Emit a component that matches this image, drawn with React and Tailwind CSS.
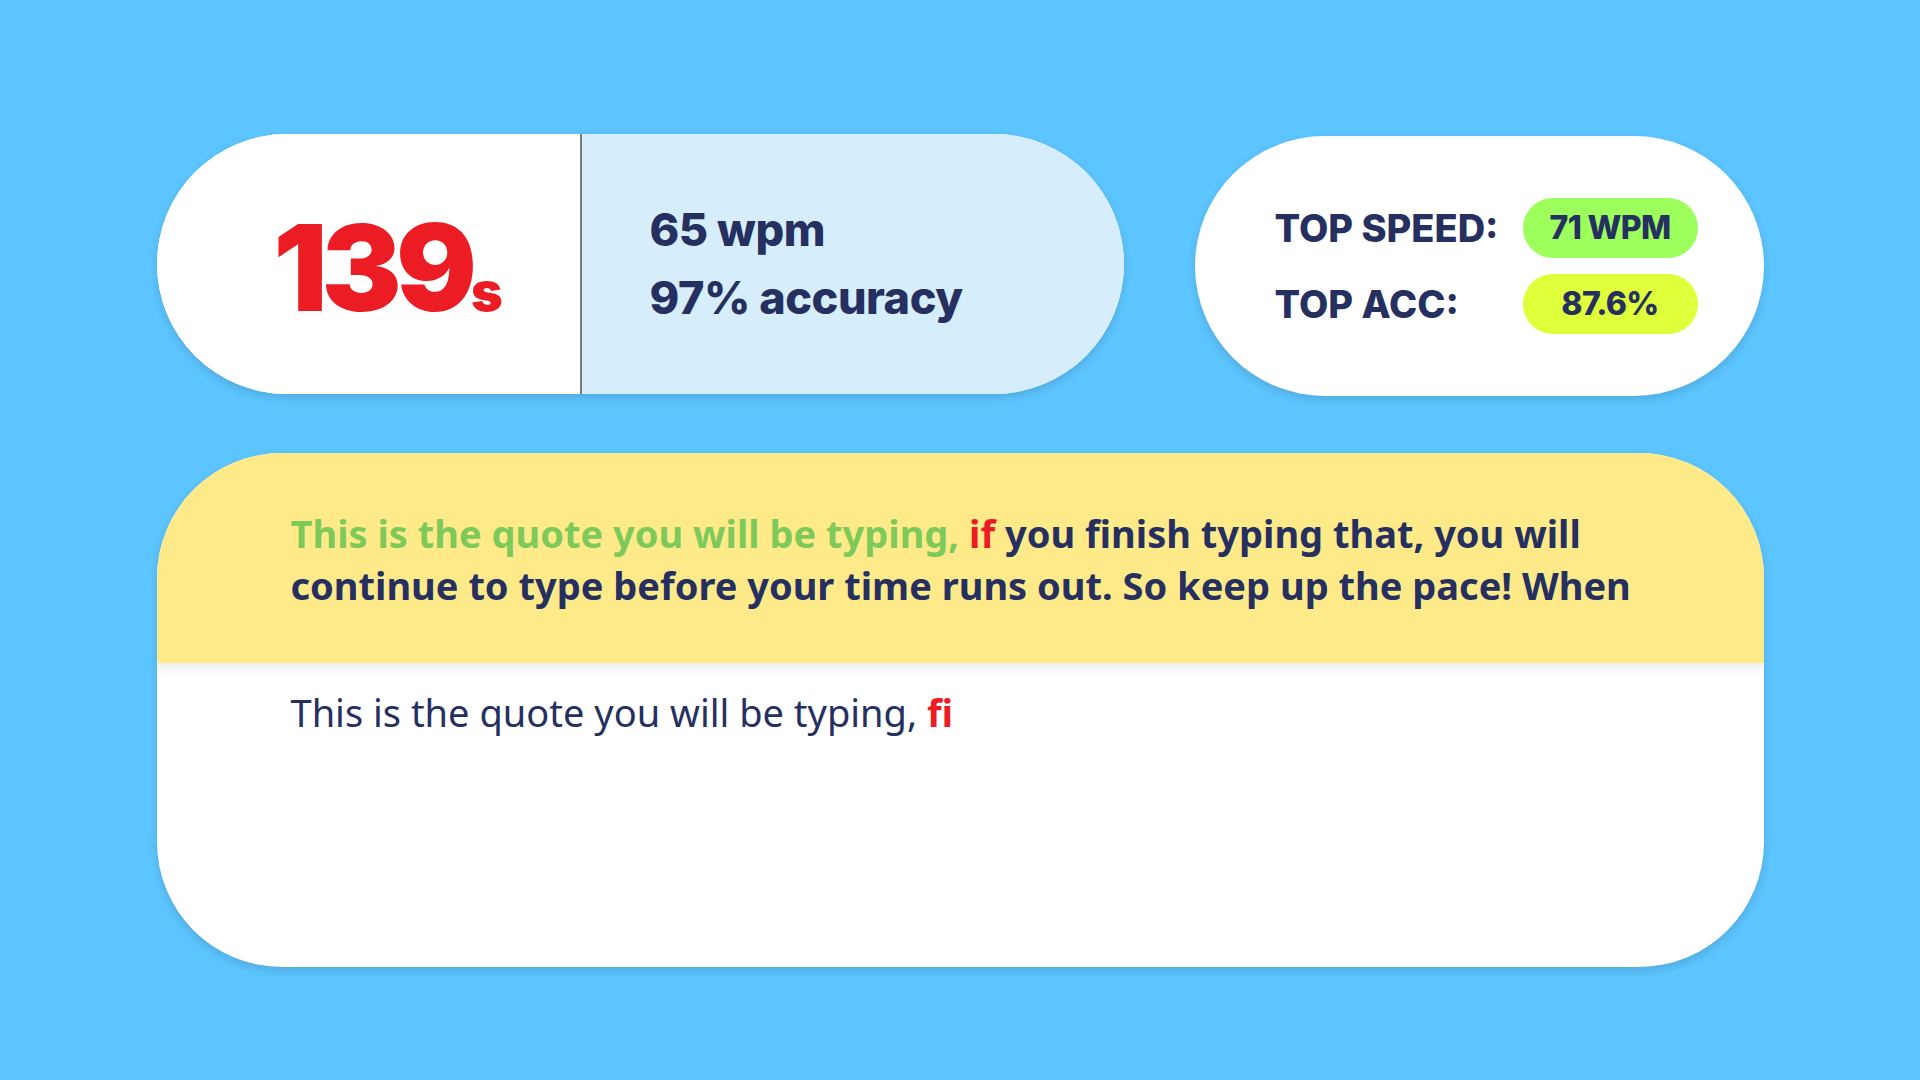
import React from "react";

export default function App() {
  const poppins = { fontFamily: "Inter, 'Noto Sans', sans-serif" };
  const segoe = { fontFamily: "'Noto Sans', 'Open Sans', sans-serif" };
  return (
    <div className="w-[1920px] h-[1080px] bg-[#5cc4fe] flex flex-col items-center pt-[134px] overflow-hidden">
      <div className="w-[1607px] flex flex-col gap-[59px]">
        <div className="flex gap-[71px] h-[260px]">
          <div className="w-[967px] h-[260px] rounded-full overflow-hidden flex bg-white shadow-[0_4px_8px_rgba(0,0,0,0.12)]">
            <div className="w-[423px] h-full bg-white flex items-center justify-center pl-[40px]">
              <div className="flex items-baseline text-[#ec1c24] font-black translate-y-[4px]" style={poppins}>
                <span className="text-[120px] leading-none tracking-[-0.05em]">139</span>
                <span className="text-[54px] leading-none">s</span>
              </div>
            </div>
            <div className="w-[2px] h-full bg-[#7a7a7a]" />
            <div className="flex-1 h-full bg-[#d6edfb] flex flex-col justify-center pl-[68px] text-[#253060] font-extrabold text-[45px] leading-[68px] tracking-[-0.01em]" style={poppins}>
              <div>65 wpm</div>
              <div>97% accuracy</div>
            </div>
          </div>
          <div className="w-[569px] h-[260px] mt-[2px] rounded-full bg-white flex items-center justify-between pl-[80px] pr-[66px] shadow-[0_4px_8px_rgba(0,0,0,0.12)]" style={poppins}>
            <div className="flex flex-col gap-[16px] text-[#253060] font-extrabold text-[38px]">
              <div className="h-[60px] flex items-center">TOP SPEED:</div>
              <div className="h-[60px] flex items-center">TOP ACC:</div>
            </div>
            <div className="flex flex-col gap-[16px] text-[#253060] font-extrabold text-[32px] tracking-[-0.02em]">
              <div className="w-[175px] h-[60px] rounded-full bg-[#9cff5c] flex items-center justify-center">71 WPM</div>
              <div className="w-[175px] h-[60px] rounded-full bg-[#dfff3a] flex items-center justify-center">87.6%</div>
            </div>
          </div>
        </div>
        <div className="w-[1607px] h-[514px] rounded-[125px] bg-white overflow-hidden flex flex-col shadow-[0_4px_8px_rgba(0,0,0,0.12)]" style={segoe}>
          <div className="relative z-10 h-[210px] bg-[#ffea8a] pl-[134px] pr-[100px] pt-[54px] shadow-[0_6px_10px_rgba(0,0,0,0.08)]">
            <p className="text-[38px] leading-[52px] font-bold text-[#253060]">
              <span className="text-[#7dc95a]">This is the quote you will be typing, </span>
              <span className="text-[#ec1c24]">if</span>
              <span> you finish typing that, you will continue to type before your time runs out. So keep up the pace! When</span>
            </p>
          </div>
          <div className="px-[134px] pt-[23px] text-[38px] leading-[52px] text-[#253060]">
            This is the quote you will be typing, <span className="font-bold text-[#ec1c24]">fi</span>
          </div>
        </div>
      </div>
    </div>
  );
}
